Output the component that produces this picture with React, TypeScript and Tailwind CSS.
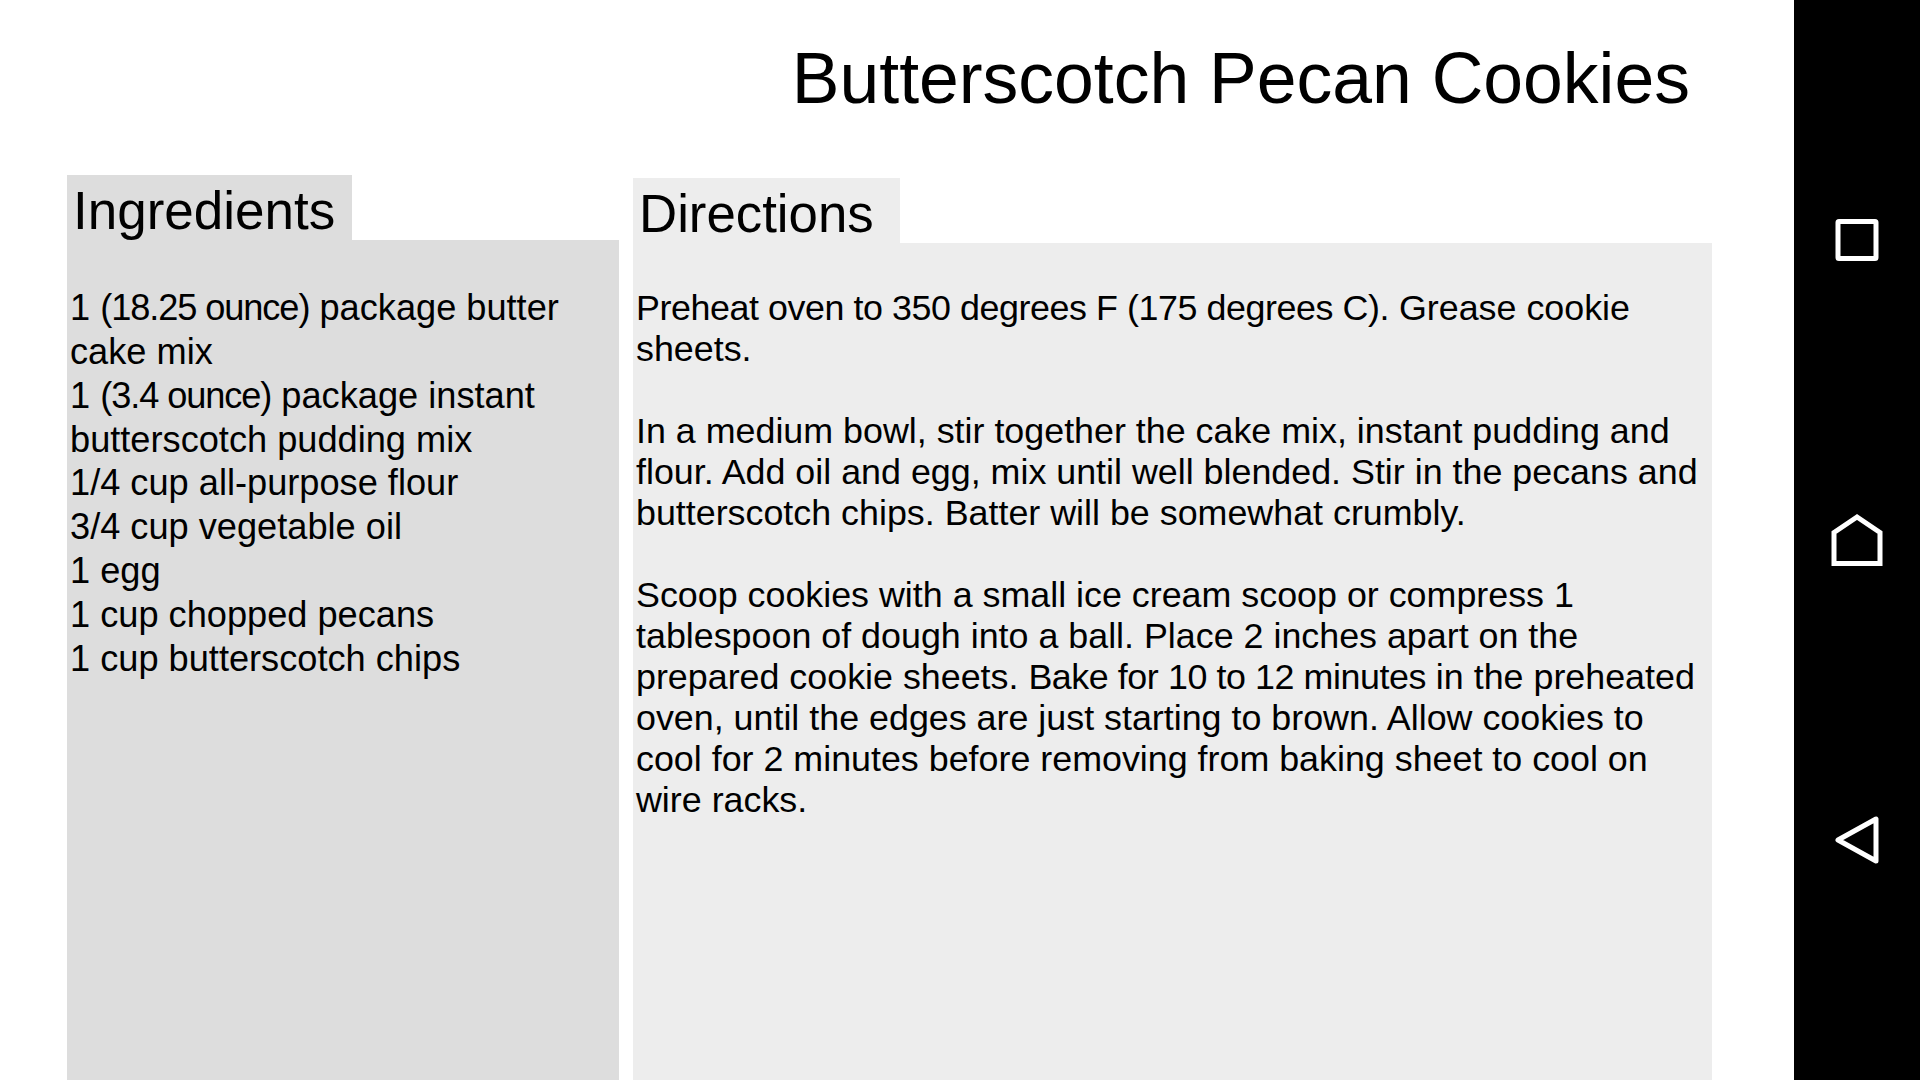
import type { ReactNode } from "react";

function Snug({ children }: { children: ReactNode }) {
  return <span className="tracking-[-0.012em]">{children}</span>;
}

function Paren({ children }: { children: ReactNode }) {
  return <span className="tracking-[-0.03em]">{children}</span>;
}

export default function App() {
  return (
    <div className="flex h-[1080px] w-[1920px] overflow-hidden bg-white font-['Liberation_Sans',Arial,sans-serif] text-black">
      <main className="flex h-full w-[1794px] flex-col">
        <h1 className="h-[175px] pr-[104px] pt-[36px] text-right text-[71.5px] font-normal leading-[84px]">
          Butterscotch Pecan Cookies
        </h1>
        <div className="flex min-h-0 flex-1 items-start pl-[67px]">
          <section className="flex h-[905px] w-[552px] flex-col">
            <h2 className="h-[65px] w-[285px] bg-[#dddddd] pl-[6px] pt-[6px] text-[53px] font-normal leading-[60px]">
              Ingredients
            </h2>
            <div className="flex-1 bg-[#dddddd] pl-[3px] pr-[30px] pt-[46px] text-[36.2px] leading-[43.85px]">
              <div>
                1 <Paren>(18.25 ounce)</Paren> package butter cake mix
              </div>
              <div>
                1 <Paren>(3.4 ounce)</Paren> package instant butterscotch pudding mix
              </div>
              <div>1/4 cup all-purpose flour</div>
              <div>3/4 cup vegetable oil</div>
              <div>1 egg</div>
              <div>1 cup chopped pecans</div>
              <div>1 cup butterscotch chips</div>
            </div>
          </section>
          <section className="ml-[14px] mt-[3px] flex h-[902px] w-[1079px] flex-col">
            <h2 className="h-[65px] w-[267px] bg-[#ededed] pl-[6px] pt-[6px] text-[52.8px] font-normal leading-[60px]">
              Directions
            </h2>
            <div className="flex flex-1 flex-col gap-[41px] bg-[#ededed] pl-[3px] pr-[3px] pt-[45px] text-[35.85px] leading-[41px]">
              <p>
                <Snug>Preheat oven to 350 degrees F (175 degrees C).</Snug> Grease cookie sheets.
              </p>
              <p>
                In a medium bowl, stir together the cake mix, instant pudding and flour. Add oil and egg, mix until well blended. Stir in the pecans and butterscotch chips. Batter will be somewhat crumbly.
              </p>
              <p>
                Scoop cookies with a small ice cream scoop or compress 1 tablespoon of dough into a ball. Place 2 inches apart on the prepared cookie sheets. <Snug>Bake for 10 to 12 minutes</Snug> in the preheated oven, until the edges are just starting to brown. Allow cookies to cool for 2 minutes before removing from baking sheet to cool on wire racks.
              </p>
            </div>
          </section>
        </div>
      </main>
      <nav className="flex h-full w-[126px] flex-col items-center justify-center bg-black">
        <div className="flex h-[300px] items-center justify-center">
          <svg width="60" height="60" viewBox="0 0 60 60" fill="none" stroke="#fff" strokeWidth="5" strokeLinejoin="round">
            <rect x="11" y="11.5" width="38" height="37" rx="1" />
          </svg>
        </div>
        <div className="flex h-[300px] items-center justify-center">
          <svg width="60" height="60" viewBox="0 0 60 60" fill="none" stroke="#fff" strokeWidth="5" strokeLinejoin="miter">
            <path d="M30 7 L 7 22.5 V 53.5 H 53 V 22.5 Z" />
          </svg>
        </div>
        <div className="flex h-[300px] items-center justify-center">
          <svg width="60" height="60" viewBox="0 0 60 60" fill="none" stroke="#fff" strokeWidth="5" strokeLinejoin="round">
            <path d="M11 30 L 49 9 V 51 Z" />
          </svg>
        </div>
      </nav>
    </div>
  );
}
